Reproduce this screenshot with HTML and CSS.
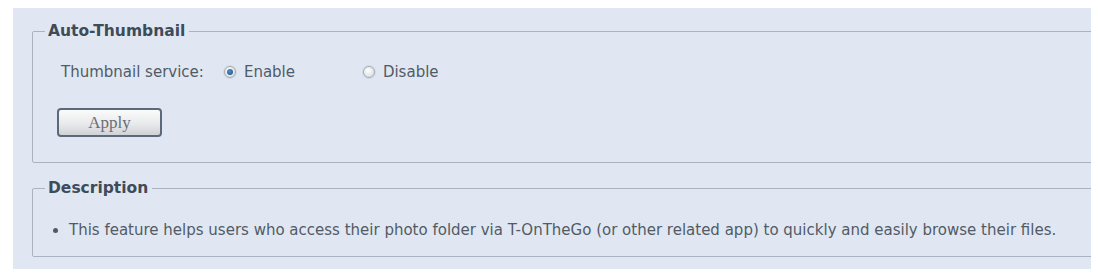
FILE: index.html
```html
<!DOCTYPE html>
<html>
<head>
<meta charset="utf-8">
<link rel="stylesheet" href="styles.css">
</head>
<body>
<div class="panel">
  <fieldset class="group group-top">
    <legend class="legend">Auto-Thumbnail</legend>
    <div class="row">
      <span class="label">Thumbnail service:</span>
      <label class="radio"><span class="dot dot-on"></span>Enable</label>
      <label class="radio radio-off"><span class="dot"></span>Disable</label>
    </div>
    <button class="apply">Apply</button>
  </fieldset>
  <fieldset class="group group-desc">
    <legend class="legend">Description</legend>
    <ul class="desc">
      <li>This feature helps users who access their photo folder via T-OnTheGo (or other related app) to quickly and easily browse their files.</li>
    </ul>
  </fieldset>
</div>
</body>
</html>
```
FILE: styles.css
```css
html, body {
  margin: 0;
  padding: 0;
  background: #ffffff;
}
body {
  padding: 8px 7px 4px 13px;
  font-family: "DejaVu Sans", Verdana, sans-serif;
  color: #525b65;
}
.panel {
  background: #e0e7f2;
  height: 261px;
  overflow: hidden;
  padding: 0 0 0 19px;
  box-sizing: border-box;
}
.group {
  margin: 0 -20px 0 0;
  border: 1px solid #aab4c0;
  border-radius: 2px;
  padding: 0;
}
.group-top {
  margin-top: 15px;
  height: 140px;
  box-sizing: border-box;
}
.group-desc {
  margin-top: 17px;
  height: 77px;
  box-sizing: border-box;
}
.legend {
  font-weight: bold;
  font-size: 15.5px;
  color: #3e4b58;
  padding: 0 4px 0 3px;
  margin-left: 12px;
  line-height: 16px;
}
.row {
  display: flex;
  align-items: center;
  font-size: 15px;
  padding: 24px 0 0 28px;
  height: 18px;
}
.label {
  margin-right: 20px;
}
.radio {
  display: flex;
  align-items: center;
  width: 139px;
}
.dot {
  width: 10px;
  height: 10px;
  border-radius: 50%;
  border: 1px solid #a3abb4;
  background: radial-gradient(circle at 40% 35%, #ffffff, #cfd5dc);
  margin-right: 8px;
  position: relative;
  box-shadow: 0 0 0 1px #d3d9e0;
}
.dot-on::after {
  content: "";
  position: absolute;
  left: 2px;
  top: 2px;
  width: 6px;
  height: 6px;
  border-radius: 50%;
  background: radial-gradient(circle at 40% 35%, #4f8fc8, #1f4f80);
}
.apply {
  display: block;
  margin: 27px 0 0 24px;
  width: 105px;
  height: 29px;
  border: 2px solid #5b6a7b;
  border-radius: 4px;
  background: linear-gradient(#fbfbfb, #e9eaec 55%, #cfd2d6);
  font-family: "Liberation Serif", "Times New Roman", serif;
  font-size: 17px;
  color: #6a6f76;
  padding: 0;
}
.desc {
  margin: 0;
  padding: 25px 0 0 36px;
  font-size: 15px;
  list-style: disc;
}
.desc li {
  padding-left: 0;
}
```
